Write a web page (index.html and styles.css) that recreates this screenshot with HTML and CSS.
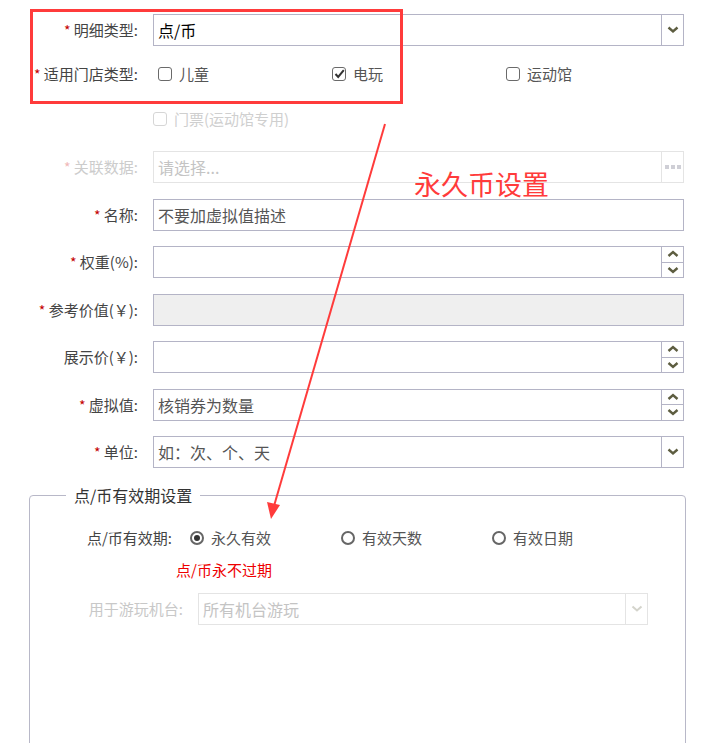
FILE: index.html
```html
<!DOCTYPE html>
<html lang="zh-CN">
<head>
    <meta charset="UTF-8">
    <title>明细设置</title>
    <link rel="stylesheet" href="styles.css">
</head>
<body>
    <div class="page">
        <div class="form">
            <div class="row row-first">
                <label class="label"><span class="star">*</span> 明细类型:</label>
                <div class="control">
                    <div class="value value-main">点/币</div>
                    <span class="side-btn">
                        <svg width="12" height="8" viewBox="0 0 12 8"><path d="M1.5 1.5 L6 5.5 L10.5 1.5" fill="none" stroke="#5d5d40" stroke-width="2.4"/></svg>
                    </span>
                </div>
            </div>

            <div class="row row-check">
                <label class="label"><span class="star">*</span> 适用门店类型:</label>
                <div class="checks">
                    <span class="check-item"><span class="check"></span>儿童</span>
                    <span class="check-item"><span class="check checked"><svg width="11" height="10" viewBox="0 0 11 10"><path d="M1.5 5 L4.2 8 L9.8 1.2" fill="none" stroke="#333" stroke-width="2"/></svg></span>电玩</span>
                    <span class="check-item"><span class="check"></span>运动馆</span>
                </div>
            </div>

            <div class="row row-ticket">
                <span></span>
                <span class="check-item disabled"><span class="check"></span>门票(运动馆专用)</span>
            </div>

            <div class="row disabled-row">
                <label class="label"><span class="star">*</span> 关联数据:</label>
                <div class="control">
                    <div class="value placeholder">请选择...</div>
                    <span class="side-btn"><span class="dots"><i></i><i></i><i></i></span></span>
                </div>
            </div>

            <div class="row">
                <label class="label"><span class="star">*</span> 名称:</label>
                <div class="control"><div class="value">不要加虚拟值描述</div></div>
            </div>

            <div class="row">
                <label class="label"><span class="star">*</span> 权重(%):</label>
                <div class="control">
                    <div class="value"></div>
                    <span class="spin">
                        <span><svg width="12" height="8" viewBox="0 0 12 8"><path d="M1.5 6 L6 2 L10.5 6" fill="none" stroke="#5d5d40" stroke-width="2.4"/></svg></span>
                        <span><svg width="12" height="8" viewBox="0 0 12 8"><path d="M1.5 2 L6 6 L10.5 2" fill="none" stroke="#5d5d40" stroke-width="2.4"/></svg></span>
                    </span>
                </div>
            </div>

            <div class="row">
                <label class="label"><span class="star">*</span> 参考价值(￥):</label>
                <div class="control readonly"><div class="value"></div></div>
            </div>

            <div class="row">
                <label class="label">展示价(￥):</label>
                <div class="control">
                    <div class="value"></div>
                    <span class="spin">
                        <span><svg width="12" height="8" viewBox="0 0 12 8"><path d="M1.5 6 L6 2 L10.5 6" fill="none" stroke="#5d5d40" stroke-width="2.4"/></svg></span>
                        <span><svg width="12" height="8" viewBox="0 0 12 8"><path d="M1.5 2 L6 6 L10.5 2" fill="none" stroke="#5d5d40" stroke-width="2.4"/></svg></span>
                    </span>
                </div>
            </div>

            <div class="row">
                <label class="label"><span class="star">*</span> 虚拟值:</label>
                <div class="control">
                    <div class="value">核销券为数量</div>
                    <span class="spin">
                        <span><svg width="12" height="8" viewBox="0 0 12 8"><path d="M1.5 6 L6 2 L10.5 6" fill="none" stroke="#5d5d40" stroke-width="2.4"/></svg></span>
                        <span><svg width="12" height="8" viewBox="0 0 12 8"><path d="M1.5 2 L6 6 L10.5 2" fill="none" stroke="#5d5d40" stroke-width="2.4"/></svg></span>
                    </span>
                </div>
            </div>

            <div class="row">
                <label class="label"><span class="star">*</span> 单位:</label>
                <div class="control">
                    <div class="value">如：次、个、天</div>
                    <span class="side-btn">
                        <svg width="12" height="8" viewBox="0 0 12 8"><path d="M1.5 1.5 L6 5.5 L10.5 1.5" fill="none" stroke="#5d5d40" stroke-width="2.4"/></svg>
                    </span>
                </div>
            </div>
        </div>

        <fieldset class="group">
            <legend>点/币有效期设置</legend>
            <div class="radio-row">
                <span class="group-label">点/币有效期:</span>
                <div class="radios">
                    <span class="radio-item"><span class="radio on"></span>永久有效</span>
                    <span class="radio-item"><span class="radio"></span>有效天数</span>
                    <span class="radio-item"><span class="radio"></span>有效日期</span>
                </div>
            </div>
            <p class="hint">点/币永不过期</p>
            <div class="machine-row">
                <span class="group-label">用于游玩机台:</span>
                <div class="control dim">
                    <div class="value placeholder">所有机台游玩</div>
                    <span class="side-btn">
                        <svg width="12" height="8" viewBox="0 0 12 8"><path d="M1.5 1.5 L6 5.5 L10.5 1.5" fill="none" stroke="#d4d4cc" stroke-width="2"/></svg>
                    </span>
                </div>
            </div>
        </fieldset>

        <!-- 标注 -->
        <div class="mark-box"></div>
        <div class="mark-text">永久币设置</div>
        <svg class="mark-arrow" width="708" height="743" viewBox="0 0 708 743">
            <line x1="385" y1="124" x2="274" y2="506" stroke="#ff3b3b" stroke-width="2"/>
            <polygon points="271,519 267,502 280,505" fill="#ff3b3b"/>
        </svg>
    </div>
</body>
</html>
```

FILE: styles.css
```css
* {
    box-sizing: border-box;
}
body {
    margin: 0;
    background: #fff;
    font-family: "Noto Sans CJK SC", "Microsoft YaHei", sans-serif;
    color: #444;
    overflow: hidden;
}
.page {
    position: relative;
    width: 708px;
    height: 743px;
    padding-top: 14px;
    overflow: hidden;
}
.form {
    display: flex;
    flex-direction: column;
    gap: 15.5px;
}
.row {
    display: grid;
    grid-template-columns: 138px 531px;
    column-gap: 15px;
    align-items: center;
    height: 32px;
}
.row-first {
    margin-bottom: -3.5px;
}
.row-check {
    margin-bottom: -2px;
}
.row-ticket {
    height: 30px;
    margin-bottom: 2px;
}
.label {
    font-size: 15px;
    line-height: 20px;
    text-align: right;
    white-space: nowrap;
    color: #444;
}
.star {
    color: #c40000;
    font-size: 14px;
}
.control {
    display: flex;
    height: 32px;
    border: 1px solid #b4b4c6;
    background: #fff;
}
.value {
    flex: 1;
    padding-left: 4px;
    font-size: 16px;
    line-height: 30px;
    color: #555;
    white-space: nowrap;
    overflow: hidden;
}
.value-main {
    color: #000;
}
.placeholder {
    color: #c4c4c4;
}
.readonly {
    background: #efefef;
}
.side-btn {
    width: 22px;
    border-left: 1px solid #b4b4c6;
    display: flex;
    align-items: center;
    justify-content: center;
}
.spin {
    width: 22px;
    border-left: 1px solid #b4b4c6;
    display: flex;
    flex-direction: column;
}
.spin span {
    flex: 1;
    display: flex;
    align-items: center;
    justify-content: center;
}
.spin span + span {
    border-top: 1px solid #b4b4c6;
}
.dots {
    display: flex;
    gap: 2px;
}
.dots i {
    width: 4px;
    height: 4px;
    background: #cfcfd6;
}

/* 复选框 */
.checks {
    display: grid;
    grid-template-columns: 174px 174px 174px;
    padding-left: 5px;
}
.check-item {
    display: flex;
    align-items: center;
    gap: 7px;
    font-size: 15px;
    line-height: 20px;
    color: #555;
}
.check {
    width: 14px;
    height: 14px;
    border: 1.5px solid #6a6a6a;
    border-radius: 3px;
    display: flex;
    align-items: center;
    justify-content: center;
}
.check-item.disabled {
    color: #cfcfcf;
    padding-left: 0;
}
.check-item.disabled .check {
    border-color: #d6d6d6;
}

/* 禁用行 */
.disabled-row .label {
    color: #cccccc;
}
.disabled-row .star {
    color: #f0b8b8;
}
.disabled-row .control {
    border-color: #e4e4e4;
}
.disabled-row .side-btn {
    border-left-color: #e4e4e4;
}

/* 有效期分组 */
.group {
    margin: 17px 0 0 29px;
    width: 657px;
    height: 300px;
    padding: 0;
    border: 1px solid #b8b8c8;
    border-radius: 4px;
}
.group legend {
    margin-left: 36px;
    padding: 0 8px;
    font-size: 16px;
    line-height: 20px;
    color: #333;
}
.radio-row {
    display: grid;
    grid-template-columns: 142px auto;
    column-gap: 18px;
    align-items: center;
    margin-top: 23px;
}
.group-label {
    font-size: 15px;
    line-height: 20px;
    text-align: right;
    color: #444;
    white-space: nowrap;
}
.radios {
    display: grid;
    grid-template-columns: 151px 151px 151px;
}
.radio-item {
    display: flex;
    align-items: center;
    gap: 7px;
    font-size: 15px;
    line-height: 20px;
    color: #555;
}
.radio {
    width: 14px;
    height: 14px;
    border: 2px solid #666;
    border-radius: 50%;
    display: flex;
    align-items: center;
    justify-content: center;
}
.radio.on::after {
    content: "";
    width: 6px;
    height: 6px;
    border-radius: 50%;
    background: #333;
}
.hint {
    margin: 12px 0 0 146px;
    font-size: 15px;
    line-height: 20px;
    color: #ee0000;
}
.machine-row {
    display: grid;
    grid-template-columns: 153px 450px;
    column-gap: 15px;
    align-items: center;
    margin-top: 13px;
}
.machine-row .group-label {
    color: #c8c8c8;
}
.control.dim {
    border-color: #e4e4e4;
}
.control.dim .side-btn {
    border-left-color: #e4e4e4;
}

/* 红色标注 */
.mark-box {
    position: absolute;
    left: 30px;
    top: 9px;
    width: 373px;
    height: 95px;
    border: 3px solid #ff3b3b;
}
.mark-text {
    position: absolute;
    left: 414px;
    top: 167px;
    font-size: 27px;
    line-height: 34px;
    color: #ff3b3b;
}
.mark-arrow {
    position: absolute;
    left: 0;
    top: 0;
    pointer-events: none;
}
```
